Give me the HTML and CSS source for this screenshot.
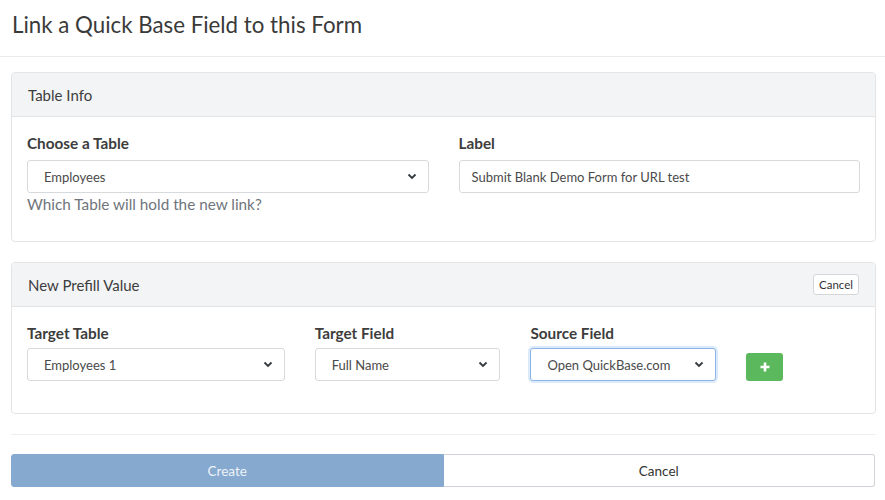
FILE: index.html
```html
<!DOCTYPE html>
<html>
<head>
<meta charset="utf-8">
<link rel="stylesheet" href="styles.css">
</head>
<body>
<div class="modal">
  <div class="modal-header">
    <h4 class="title">Link a Quick Base Field to this Form</h4>
  </div>
  <div class="modal-body">
    <div class="card">
      <div class="card-header"><span>Table Info</span></div>
      <div class="card-body card-body-1">
        <div class="row">
          <div class="col col-6">
            <label class="lbl">Choose a Table</label>
            <div class="select"><span>Employees</span>
              <svg class="chev" width="10" height="7" viewBox="0 0 10 7"><path d="M1.5 1.5 L5 5 L8.5 1.5" fill="none" stroke="#343a40" stroke-width="1.8"/></svg>
            </div>
            <div class="help">Which Table will hold the new link?</div>
          </div>
          <div class="col col-6">
            <label class="lbl">Label</label>
            <div class="input">Submit Blank Demo Form for URL test</div>
          </div>
        </div>
      </div>
    </div>

    <div class="card card-2">
      <div class="card-header header-split"><span>New Prefill Value</span><button class="btn-xs">Cancel</button></div>
      <div class="card-body card-body-2">
        <div class="row">
          <div class="col col-4">
            <label class="lbl lbl-2">Target Table</label>
            <div class="select"><span>Employees 1</span>
              <svg class="chev" width="10" height="7" viewBox="0 0 10 7"><path d="M1.5 1.5 L5 5 L8.5 1.5" fill="none" stroke="#343a40" stroke-width="1.8"/></svg>
            </div>
          </div>
          <div class="col col-3">
            <label class="lbl lbl-2">Target Field</label>
            <div class="select"><span>Full Name</span>
              <svg class="chev" width="10" height="7" viewBox="0 0 10 7"><path d="M1.5 1.5 L5 5 L8.5 1.5" fill="none" stroke="#343a40" stroke-width="1.8"/></svg>
            </div>
          </div>
          <div class="col col-3">
            <label class="lbl lbl-2">Source Field</label>
            <div class="select focus"><span>Open QuickBase.com</span>
              <svg class="chev" width="10" height="7" viewBox="0 0 10 7"><path d="M1.5 1.5 L5 5 L8.5 1.5" fill="none" stroke="#343a40" stroke-width="1.8"/></svg>
            </div>
          </div>
          <div class="col col-2 col-btn">
            <button class="btn-add"><svg width="12" height="12" viewBox="0 0 12 12"><path d="M6 1.5 V10.5 M1.5 6 H10.5" stroke="#fff" stroke-width="2.6"/></svg></button>
          </div>
        </div>
      </div>
    </div>

    <hr class="sep">

    <div class="actions">
      <button class="btn btn-create">Create</button>
      <button class="btn btn-cancel">Cancel</button>
    </div>
  </div>
</div>
</body>
</html>
```
FILE: styles.css
```css
* { box-sizing: border-box; }
html, body { margin: 0; padding: 0; background: #fff; }
body {
  font-family: "Lato", "Open Sans", sans-serif;
  color: #333;
  width: 885px;
  height: 500px;
  overflow: hidden;
}
.modal-header {
  height: 57px;
  border-bottom: 1px solid #e9ecef;
  padding: 11px 12px 0 12px;
}
.title {
  margin: 0;
  font-size: 22.3px;
  font-weight: 400;
  line-height: 28px;
  color: #3a3a3a;
}
.modal-body {
  padding: 15px 10px 0 11px;
}
.card {
  border: 1px solid #e3e4e6;
  border-radius: 4px;
  width: 865px;
}
.card-2 { margin-top: 20px; }
.card-header {
  background: #f3f4f6;
  border-bottom: 1px solid #e3e4e6;
  height: 44px;
  padding: 0 16px;
  display: flex;
  align-items: center;
  font-size: 15px;
  color: #3d3d3d;
  border-radius: 4px 4px 0 0;
}
.header-split { justify-content: space-between; }
.card-body { padding: 16px 15px; }
.card-body-1 { height: 124px; padding-top: 17px; }
.card-body-2 { height: 106px; padding-top: 17px; }
.row { display: flex; margin: 0 -15px; }
.col { padding: 0 15px; }
.col-6 { width: 50%; }
.col-4 { width: 33.3333%; }
.col-3 { width: 25%; }
.col-2 { width: 16.6667%; }
.col-btn { display: flex; align-items: flex-end; padding-bottom: 0; }
.lbl {
  display: block;
  font-weight: 700;
  font-size: 15.3px;
  color: #3d3d3d;
  line-height: 18px;
  margin-bottom: 8px;
}
.lbl-2 { margin-bottom: 6px; }
.select, .input {
  height: 33px;
  border: 1px solid #d7dadd;
  border-radius: 3px;
  display: flex;
  align-items: center;
  justify-content: space-between;
  font-size: 13px;
  color: #4a4a4a;
  background: #fff;
}
.select { padding: 0 11px 0 16px; }
.input { padding: 0 12px; }
.select.focus {
  border-color: #8cb4e8;
  box-shadow: 0 0 0 2px rgba(120, 170, 235, 0.25);
}
.chev { display: block; }
.help {
  font-size: 15.3px;
  color: #6f757b;
  margin-top: 2px;
  line-height: 18px;
}
.btn-xs {
  font-family: inherit;
  font-size: 11.5px;
  color: #333;
  background: #fff;
  border: 1px solid #d4d6d9;
  border-radius: 3px;
  height: 21px;
  padding: 0 5px;
  margin-right: 0;
}
.btn-add {
  width: 37px;
  height: 28px;
  background: #5cb85c;
  border: none;
  border-radius: 3px;
  display: flex;
  align-items: center;
  justify-content: center;
  padding: 0;
}
.sep {
  border: 0;
  border-top: 1px solid #eceef0;
  margin: 20px 0 0 0;
  width: 865px;
}
.actions {
  display: flex;
  margin-top: 19px;
  width: 864px;
}
.btn {
  flex: 1;
  height: 33px;
  font-family: inherit;
  font-size: 13.5px;
  border-radius: 3px;
}
.btn-create {
  background: #86a9cf;
  border: 1px solid #86a9cf;
  color: #eef3f9;
  border-radius: 3px 0 0 3px;
}
.btn-cancel {
  background: #fff;
  border: 1px solid #cfd2d6;
  border-left: none;
  color: #333;
  border-radius: 0 3px 3px 0;
}
```
